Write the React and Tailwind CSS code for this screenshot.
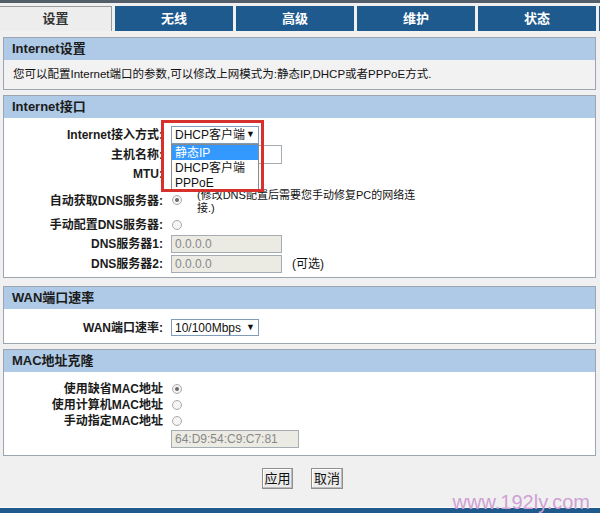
import React from "react";

const font = { fontFamily: '"Liberation Sans", "Noto Sans CJK SC", sans-serif' };

function Radio({ checked }) {
  return (
    <span className="flex w-[10px] h-[10px] rounded-full border border-[#a9a9a9] bg-[#f4f4f4] items-center justify-center">
      {checked && <span className="w-[4px] h-[4px] rounded-full bg-[#6b6b6b]" />}
    </span>
  );
}

function Panel({ title, className, bodyClass, children }) {
  return (
    <div className={"border border-[#9ba6b1] " + className}>
      <div className="h-[22px] bg-[#aecae6] px-[8px] flex items-center text-[13px] font-bold text-[#1b1b1b]">
        {title}
      </div>
      <div className={bodyClass}>{children}</div>
    </div>
  );
}

function Row({ label, h, children, labelClass = "" }) {
  return (
    <div className={"flex " + h}>
      <div className={"w-[159px] shrink-0 text-right text-[12px] font-bold text-[#1b1b1b] flex items-center justify-end " + labelClass}>
        {label}
      </div>
      <div className="ml-[8px] flex items-center relative">{children}</div>
    </div>
  );
}

const tabs = ["无线", "高级", "维护", "状态"];

export default function App() {
  return (
    <div className="relative w-[600px] h-[513px] overflow-hidden bg-[#f0f0f0]" style={font}>
      <div className="h-[3px] bg-[#525e6a]" />
      {/* tabs */}
      <div className="mt-[3px] flex gap-[3px] h-[25px]">
        <div className="w-[112px] shrink-0 bg-[#ededed] border-t border-r border-[#9a9a9a] flex items-center justify-center text-[13px] font-bold text-[#333]">
          设置
        </div>
        {tabs.map((t) => (
          <div key={t} className="w-[118px] shrink-0 bg-[#1e5a8d] flex items-center justify-center text-[13px] font-bold text-white">
            {t}
          </div>
        ))}
        <div className="flex-1 bg-[#1e5a8d]" />
      </div>

      <div className="px-[3px] pr-[4px]">
        <Panel
          title="Internet设置"
          className="mt-[6px]"
          bodyClass="h-[29px] bg-[#f2f2f2] px-[9px] flex items-center text-[11.5px] text-[#111] whitespace-nowrap"
        >
          您可以配置Internet端口的参数,可以修改上网模式为:静态IP,DHCP或者PPPoE方式.
        </Panel>

        <Panel title="Internet接口" className="mt-[5px]" bodyClass="bg-white pt-[7px] pb-[3px]">
          <Row label="Internet接入方式:" h="h-[20px]">
            <div className="w-[88px] h-[18px] border border-[#7f9db9] bg-white flex items-center justify-between px-[3px] text-[12px] text-[#111] whitespace-nowrap">
              <span>DHCP客户端</span>
              <span className="text-[9px]">▼</span>
            </div>
            {/* dropdown list */}
            <div className="absolute left-0 top-[19px] w-[88px] h-[47px] bg-white border border-[#8a8a8a] z-10 text-[12px] text-[#111] whitespace-nowrap">
              <div className="h-[15px] bg-[#3399ff] text-white px-[3px] flex items-center">静态IP</div>
              <div className="h-[15px] px-[3px] flex items-center">DHCP客户端</div>
              <div className="h-[15px] px-[3px] flex items-center">PPPoE</div>
            </div>
            {/* red annotation */}
            <div className="absolute left-[-10px] top-[-5px] w-[103px] h-[72px] border-[3px] border-[#d7312d] z-20" />
          </Row>
          <Row label="主机名称:" h="h-[19px]">
            <div className="w-[111px] h-[19px] border border-[#a5acb2] bg-white" />
          </Row>
          <Row label="MTU:" h="h-[19px]">
            <div className="w-[60px] h-[18px] border border-[#a5acb2] bg-white" />
          </Row>
          <div className="flex h-[33px]">
            <div className="w-[159px] shrink-0 text-right text-[12px] font-bold text-[#1b1b1b] pt-[11px] leading-[14px]">
              自动获取DNS服务器:
            </div>
            <div className="ml-[9px] pt-[12px] flex items-start">
              <Radio checked />
            </div>
            <div className="ml-[15px] pt-[6px] text-[11px] leading-[13px] text-[#111]">
              <span className="whitespace-nowrap">(修改DNS配置后需要您手动修复PC的网络连</span>
              <br />
              接.)
            </div>
          </div>
          <Row label="手动配置DNS服务器:" h="h-[18px]">
            <span className="ml-[1px]">
              <Radio />
            </span>
          </Row>
          <Row label="DNS服务器1:" h="h-[20px]">
            <div className="w-[111px] h-[18px] border border-[#a5acb2] bg-[#ebebe4] px-[3px] flex items-center text-[12px] text-[#888]">
              0.0.0.0
            </div>
          </Row>
          <Row label="DNS服务器2:" h="h-[20px]">
            <div className="w-[111px] h-[18px] border border-[#a5acb2] bg-[#ebebe4] px-[3px] flex items-center text-[12px] text-[#888]">
              0.0.0.0
            </div>
            <span className="ml-[10px] text-[12px] text-[#111]">(可选)</span>
          </Row>
        </Panel>

        <Panel title="WAN端口速率" className="mt-[8px]" bodyClass="bg-white h-[34px] pt-[10px]">
          <Row label="WAN端口速率:" h="h-[17px]">
            <div className="w-[88px] h-[17px] border border-[#7f9db9] bg-white flex items-center justify-between px-[3px] text-[12px] text-[#111] whitespace-nowrap">
              <span>10/100Mbps</span>
              <span className="text-[9px]">▼</span>
            </div>
          </Row>
        </Panel>

        <Panel title="MAC地址克隆" className="mt-[5px]" bodyClass="bg-white h-[83px] pt-[9px]">
          <Row label="使用缺省MAC地址" h="h-[16px]">
            <span className="ml-[1px]">
              <Radio checked />
            </span>
          </Row>
          <Row label="使用计算机MAC地址" h="h-[16px]">
            <span className="ml-[1px]">
              <Radio />
            </span>
          </Row>
          <Row label="手动指定MAC地址" h="h-[16px]">
            <span className="ml-[1px]">
              <Radio />
            </span>
          </Row>
          <Row label="" h="h-[20px]">
            <div className="w-[128px] h-[18px] border border-[#a5acb2] bg-[#ebebe4] px-[3px] flex items-center text-[12px] text-[#888]">
              64:D9:54:C9:C7:81
            </div>
          </Row>
        </Panel>

        <div className="mt-[12px] flex justify-center gap-[18px] pl-[6px]">
          <button className="w-[31px] h-[21px] border border-[#8f8f8f] bg-[#ececec] text-[13px] text-[#111] flex items-center justify-center shadow-[inset_-1px_-1px_0_#bdbdbd,inset_1px_1px_0_#fff]">
            应用
          </button>
          <button className="w-[32px] h-[21px] border border-[#8f8f8f] bg-[#ececec] text-[13px] text-[#111] flex items-center justify-center shadow-[inset_-1px_-1px_0_#bdbdbd,inset_1px_1px_0_#fff]">
            取消
          </button>
        </div>
      </div>

      <div className="absolute left-0 right-0 bottom-0 h-[6px] bg-[#1f5a8c] border-t border-[#fafafa]" />
      <div className="absolute right-[10px] bottom-[1px] text-[20px] leading-[20px] text-[#cfa0d4]" style={{ fontFamily: '"Liberation Sans", sans-serif' }}>
        www.192ly.com
      </div>
    </div>
  );
}
